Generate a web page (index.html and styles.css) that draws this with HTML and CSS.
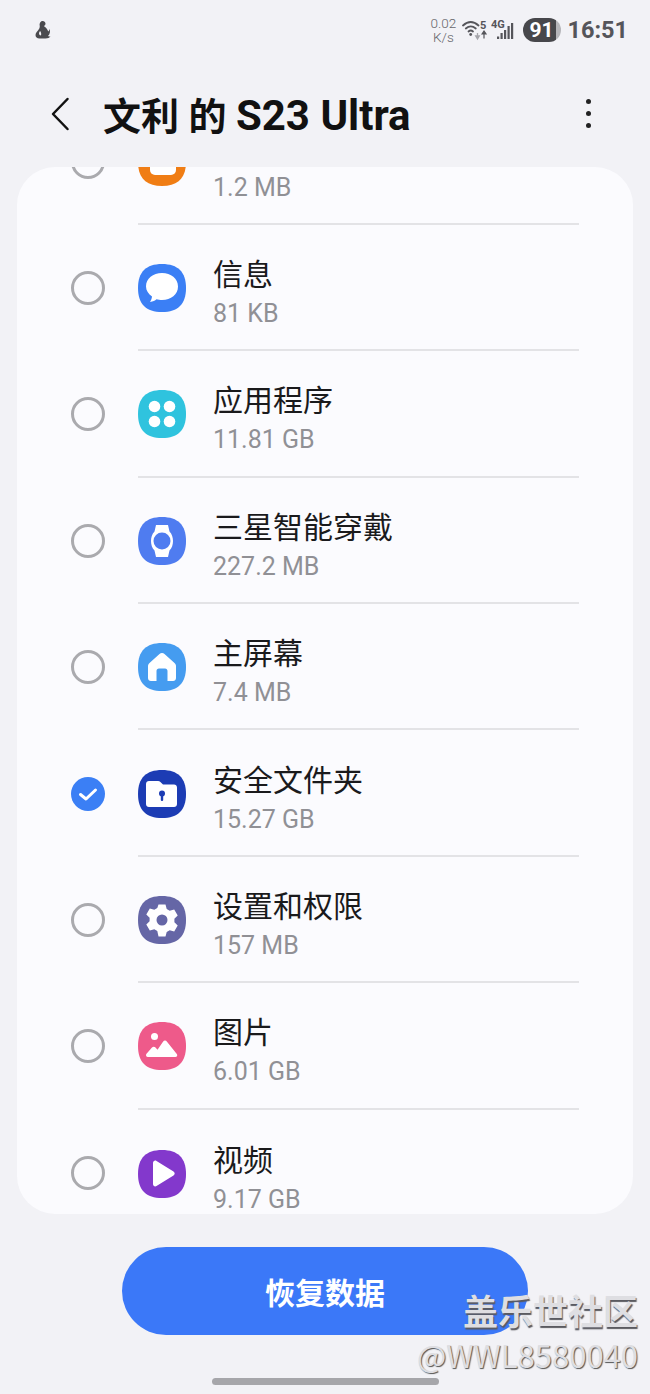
FILE: index.html
```html
<!DOCTYPE html>
<html lang="zh-CN">
<head>
<meta charset="UTF-8" />
<meta name="viewport" content="width=device-width, initial-scale=1.0" />
<title>文利 的 S23 Ultra</title>
<link rel="stylesheet" href="styles.css">
</head>
<body>
<div id="phone">
  <div class="status-bar">
    <svg class="status-left" viewBox="0 0 18 20" width="18" height="20">
      <path fill="#4a4a4e" d="M8.500 1c2 0 3.300 1.500 3 3.200L10 6.300c2 1.300 3.500 3 4.300 5.200.6-.5 1-1.500 1.200-2.800 1 2.500.5 5.300-1.500 7.300.8.400 1.500.6 2.500.6-1 1-2.500 2-5 2H5.500C3 18.600 1.500 17 1.500 15c0-2.500 2.500-4 3.800-6.500.5-1 .6-2 .4-3C5.300 3.500 6.500 1 8.500 1z"/>
      <path fill="#f2f2f6" d="M6 11c1 1 1.500 2.500 1 4.500-1 0-2-.8-2-2 0-1 .4-1.800 1-2.500z"/>
    </svg>
    <div class="status-right">
      <div class="net-speed">0.02<br>K/s</div>
      <svg class="wifi" viewBox="0 0 28 22" width="28" height="22">
        <g fill="none" stroke="#55555a" stroke-width="1.800" stroke-linecap="round">
          <path d="M1 6.500c5-4.500 10.500-4.500 15.500 0"/>
          <path d="M3.800 9.500c3.500-3 6.500-3 10 0"/>
          <path d="M6.500 12.500c1.500-1.300 3-1.300 4.500 0"/>
        </g>
        <circle cx="8.700" cy="15.500" r="1.400" fill="#55555a"/>
        <path d="M15.500 14v3.500M13.700 17l1.800 3 1.800-3z" fill="#a5a5aa" stroke="#a5a5aa" stroke-width="1.300"/>
        <path d="M22 19.500v-5M20 15l2-3 2 3z" fill="#55555a" stroke="#55555a" stroke-width="1.200"/>
        <text x="18" y="9.500" class="wifi-five">5</text>
      </svg>
      <svg class="signal" viewBox="0 0 26 26" width="26" height="26">
        <text x="0" y="11" class="sig-label">4G</text>
        <g fill="#55555a">
          <rect x="6" y="19.500" width="2.200" height="2.500"/>
          <rect x="9.500" y="16" width="2.200" height="6"/>
          <rect x="13" y="13" width="2.200" height="9"/>
          <rect x="16.500" y="9" width="2.200" height="13"/>
          <rect x="20" y="6" width="2.200" height="16"/>
        </g>
      </svg>
      <div class="battery"><span>91</span></div>
      <div class="clock">16:51</div>
    </div>
  </div>

  <div class="app-bar">
    <svg class="back" viewBox="0 0 20 34" width="20" height="34">
      <path d="M17.500 2 3 17l14.500 15" fill="none" stroke="#111" stroke-width="2.500" stroke-linecap="round" stroke-linejoin="round"/>
    </svg>
    <h1 class="page-title">文利 的 <span class="model">S23 Ultra</span></h1>
    <div class="kebab"><i></i><i></i><i></i></div>
  </div>

  <div class="card">
    <div class="list">
      <div class="row">
        <span class="radio"></span>
        <div class="row-main">
          <svg class="app-icon" viewBox="0 0 48 48">
            <path fill="#f07d14" d="M24 0C40 0 48 8 48 24S40 48 24 48 0 40 0 24 8 0 24 0Z"/>
            <rect x="12" y="6" width="26" height="31" rx="5" fill="#fff"/>
          </svg>
          <div class="row-text"><div class="name">&nbsp;</div><div class="size">1.2 MB</div></div>
        </div>
      </div>
      <div class="row">
        <span class="radio"></span>
        <div class="row-main">
          <svg class="app-icon" viewBox="0 0 48 48">
            <path fill="#3b7ff5" d="M24 0C40 0 48 8 48 24S40 48 24 48 0 40 0 24 8 0 24 0Z"/>
            <path fill="#fff" d="M24 9c9 0 16 5.500 16 13.500S33 36 24 36c-2 0-4-.3-5.500-.8-1.500 1.300-3.500 2.300-6.500 2.800 1-1.500 1.800-3.200 2-5.500-3.500-2.500-6-6-6-10C8 14.500 15 9 24 9z"/>
          </svg>
          <div class="row-text"><div class="name">信息</div><div class="size">81 KB</div></div>
        </div>
      </div>
      <div class="row">
        <span class="radio"></span>
        <div class="row-main">
          <svg class="app-icon" viewBox="0 0 48 48">
            <path fill="#2fc3de" d="M24 0C40 0 48 8 48 24S40 48 24 48 0 40 0 24 8 0 24 0Z"/>
            <g fill="#fff">
              <circle cx="16.500" cy="16.500" r="5.800"/><circle cx="31.500" cy="16.500" r="5.800"/>
              <circle cx="16.500" cy="31.500" r="5.800"/><circle cx="31.500" cy="31.500" r="5.800"/>
            </g>
          </svg>
          <div class="row-text"><div class="name">应用程序</div><div class="size">11.81 GB</div></div>
        </div>
      </div>
      <div class="row">
        <span class="radio"></span>
        <div class="row-main">
          <svg class="app-icon" viewBox="0 0 48 48">
            <path fill="#4f7cf0" d="M24 0C40 0 48 8 48 24S40 48 24 48 0 40 0 24 8 0 24 0Z"/>
            <path fill="#fff" d="M18 8h12l1.500 6.500C34 17 35 20.500 35 24s-1 7-3.500 9.500L30 40H18l-1.500-6.500C14 31 13 27.500 13 24s1-7 3.500-9.500z"/>
            <circle cx="24" cy="24" r="8.500" fill="#4f7cf0"/>
          </svg>
          <div class="row-text"><div class="name">三星智能穿戴</div><div class="size">227.2 MB</div></div>
        </div>
      </div>
      <div class="row">
        <span class="radio"></span>
        <div class="row-main">
          <svg class="app-icon" viewBox="0 0 48 48">
            <path fill="#459cf0" d="M24 0C40 0 48 8 48 24S40 48 24 48 0 40 0 24 8 0 24 0Z"/>
            <path fill="#fff" fill-rule="evenodd" d="M24 10c1 0 1.800.4 2.500 1l10 9c1 .9 1.500 2 1.500 3.300V35c0 1.700-1.300 3-3 3h-5.500V28c0-1.500-1-2.500-2.500-2.500h-6c-1.500 0-2.500 1-2.500 2.500v10H13c-1.700 0-3-1.300-3-3V23.300c0-1.300.5-2.400 1.500-3.300l10-9c.7-.6 1.500-1 2.500-1z"/>
          </svg>
          <div class="row-text"><div class="name">主屏幕</div><div class="size">7.4 MB</div></div>
        </div>
      </div>
      <div class="row">
        <span class="radio checked">
          <svg viewBox="0 0 34 34" width="34" height="34"><path d="M9.500 17.500l5.500 4.500 9.500-9" fill="none" stroke="#fff" stroke-width="3" stroke-linecap="round" stroke-linejoin="round"/></svg>
        </span>
        <div class="row-main">
          <svg class="app-icon" viewBox="0 0 48 48">
            <path fill="#1c3cb4" d="M24 0C40 0 48 8 48 24S40 48 24 48 0 40 0 24 8 0 24 0Z"/>
            <path fill="#fff" d="M11 11h9c1 0 1.800.4 2.400 1l2.600 2.500h11c1.700 0 3 1.300 3 3V34c0 1.700-1.300 3-3 3H11c-1.700 0-3-1.300-3-3V14c0-1.700 1.300-3 3-3z"/>
            <circle cx="24" cy="23.500" r="3" fill="#1c3cb4"/>
            <rect x="22.800" y="24" width="2.400" height="7" rx="1" fill="#1c3cb4"/>
          </svg>
          <div class="row-text"><div class="name">安全文件夹</div><div class="size">15.27 GB</div></div>
        </div>
      </div>
      <div class="row">
        <span class="radio"></span>
        <div class="row-main">
          <svg class="app-icon" viewBox="0 0 48 48">
            <path fill="#6566a6" d="M24 0C40 0 48 8 48 24S40 48 24 48 0 40 0 24 8 0 24 0Z"/>
            <path fill="#fff" fill-rule="evenodd" d="M20.500 8.500h7l1.200 4.500 3 1.700 4.500-1.200 3.500 6-3.300 3.300v3.400l3.300 3.300-3.500 6-4.500-1.200-3 1.700-1.200 4.500h-7L19.300 35l-3-1.700-4.500 1.200-3.500-6 3.300-3.300v-3.400l-3.300-3.300 3.500-6 4.500 1.200 3-1.700zM24 18.500a5.500 5.500 0 1 0 0 11 5.500 5.500 0 0 0 0-11z"/>
          </svg>
          <div class="row-text"><div class="name">设置和权限</div><div class="size">157 MB</div></div>
        </div>
      </div>
      <div class="row">
        <span class="radio"></span>
        <div class="row-main">
          <svg class="app-icon" viewBox="0 0 48 48">
            <path fill="#ee5a8a" d="M24 0C40 0 48 8 48 24S40 48 24 48 0 40 0 24 8 0 24 0Z"/>
            <circle cx="16.500" cy="14.500" r="3.500" fill="#fff"/>
            <path fill="#fff" d="M10 35c-1.800 0-2.600-1.800-1.500-3.200l5.500-6.300c1-1.100 2.500-1.100 3.500 0l2 2.200 5.500-8c1-1.500 3-1.500 4 0l9.800 12.300c1 1.400.3 3-1.500 3z"/>
          </svg>
          <div class="row-text"><div class="name">图片</div><div class="size">6.01 GB</div></div>
        </div>
      </div>
      <div class="row">
        <span class="radio"></span>
        <div class="row-main">
          <svg class="app-icon" viewBox="0 0 48 48">
            <path fill="#8338cc" d="M24 0C40 0 48 8 48 24S40 48 24 48 0 40 0 24 8 0 24 0Z"/>
            <path fill="#fff" d="M15 13c0-2 2-3 3.500-2l17 10.500c1.600 1 1.600 3 0 4L18.500 36c-1.500 1-3.500 0-3.500-2z"/>
          </svg>
          <div class="row-text"><div class="name">视频</div><div class="size">9.17 GB</div></div>
        </div>
      </div>
    </div>
  </div>

  <div class="footer">
    <button class="restore-btn">恢复数据</button>
  </div>
  <div class="home-bar"></div>

  <div class="watermark">
    <div class="wm-title">盖乐世社区</div>
    <div class="wm-user">@WWL8580040</div>
  </div>
</div>
</body>
</html>
```

FILE: styles.css
```css
* {
  box-sizing: border-box;
}

body {
  margin: 0;
  background: #f2f2f6;
  font-family: Roboto, "Noto Sans CJK SC", sans-serif;
}

#phone {
  position: relative;
  width: 650px;
  height: 1394px;
  overflow: hidden;
  display: flex;
  flex-direction: column;
}

.status-bar {
  height: 60px;
  display: flex;
  justify-content: space-between;
  align-items: center;
  padding: 0 22px 0 34px;
}

.status-right {
  display: flex;
  align-items: center;
}

.net-speed {
  width: 26px;
  font-size: 13.5px;
  line-height: 14px;
  font-weight: 300;
  color: #66666b;
  text-align: center;
  margin-right: 6px;
}

.wifi-five {
  font: bold 11px Roboto, sans-serif;
  fill: #55555a;
}

.sig-label {
  font: bold 11px Roboto, sans-serif;
  fill: #55555a;
}

.signal {
  margin-left: 1px;
}

.battery {
  width: 38px;
  height: 24px;
  margin-left: 6px;
  border-radius: 12px;
  background: linear-gradient(90deg, #47474b 88%, #b5b5b9 88%);
  color: #fff;
  font-size: 21px;
  font-weight: 700;
  line-height: 24px;
  text-align: center;
}

.battery span {
  display: block;
  padding-right: 2px;
}

.clock {
  margin-left: 6px;
  font-size: 23.5px;
  font-weight: 700;
  color: #55555a;
}

.app-bar {
  height: 107px;
  display: flex;
  align-items: center;
  padding: 0 0 0 50px;
  position: relative;
}

.back {
  flex: none;
}

.page-title {
  margin: 0 0 0 33px;
  font-size: 38px;
  font-weight: 700;
  color: #111;
  white-space: nowrap;
}

.model {
  font-size: 42px;
}

.kebab {
  margin-left: auto;
  margin-right: 59px;
  display: flex;
  flex-direction: column;
  gap: 7px;
}

.kebab i {
  width: 5px;
  height: 5px;
  border-radius: 50%;
  background: #222;
}

.card {
  margin: 0 17px;
  height: 1047px;
  background: #fbfbfe;
  border-radius: 38px;
  overflow: hidden;
  flex: none;
}

.list {
  margin-top: -68.6px;
}

.row {
  height: 126.4px;
  display: flex;
  align-items: center;
  padding-left: 54px;
}

.radio {
  flex: none;
  width: 34px;
  height: 34px;
  border-radius: 50%;
  border: 3px solid #aaaaae;
}

.radio.checked {
  border: 0;
  background: #3b7ff5;
}

.radio.checked svg {
  display: block;
}

.row-main {
  width: 441px;
  height: 100%;
  margin-left: 33px;
  padding-top: 2px;
  display: flex;
  align-items: center;
  border-bottom: 2px solid #e3e3e6;
}

.row:last-child .row-main {
  border-bottom: 0;
}

.app-icon {
  flex: none;
  width: 48px;
  height: 48px;
}

.row-text {
  margin-left: 27px;
  padding-top: 12px;
}

.name {
  font-size: 30px;
  line-height: 39px;
  color: #1a1a1c;
}

.size {
  font-size: 25px;
  line-height: 39px;
  color: #909095;
}

.footer {
  padding-top: 33px;
  display: flex;
  justify-content: center;
}

.restore-btn {
  width: 406px;
  height: 88px;
  border: 0;
  border-radius: 44px;
  background: #3b78f8;
  color: #fff;
  font-family: inherit;
  font-size: 30px;
  font-weight: 700;
}

.home-bar {
  width: 227px;
  height: 7px;
  margin: 43px auto 0;
  border-radius: 4px;
  background: #a6a6aa;
}

.watermark {
  position: absolute;
  right: 12px;
  top: 1288px;
  text-align: right;
  color: #dedee2;
}

.wm-title {
  font-family: "Noto Sans CJK SC", sans-serif;
  font-size: 35px;
  line-height: 44px;
  font-weight: 700;
  text-shadow: 1px 2px 1px #5a5a60;
}

.wm-user {
  font-family: "Noto Sans CJK SC", sans-serif;
  font-size: 31px;
  line-height: 46px;
  text-shadow: 1px 1px 1px #555;
}
```
